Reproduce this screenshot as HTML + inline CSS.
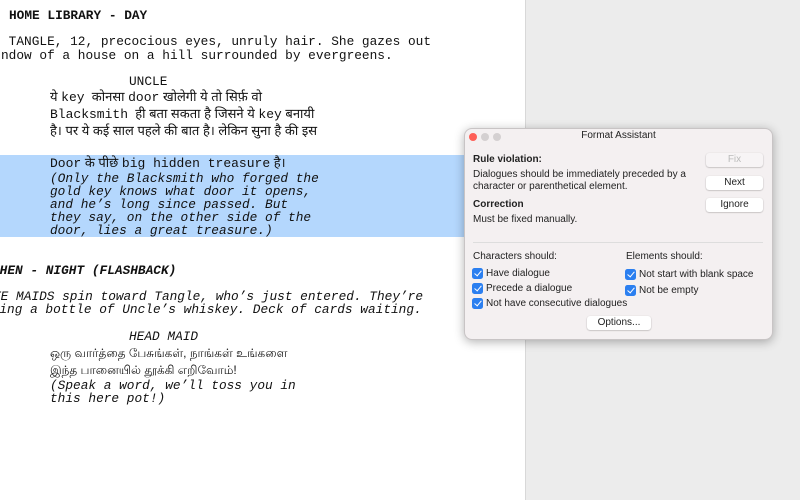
<!DOCTYPE html>
<html><head><meta charset="utf-8"><style>
*{margin:0;padding:0;box-sizing:border-box}
body{width:800px;height:500px;overflow:hidden;background:#fff;position:relative;font-family:"Liberation Mono",monospace;font-size:12.8px;color:#111}
.side{position:absolute;left:525px;top:0;width:275px;height:500px;background:#ececec;border-left:1px solid #d8d8d8}
.hl{position:absolute;left:0;top:155px;width:525px;height:82px;background:#b4d7fd}
.l{position:absolute;white-space:pre;line-height:14px}
.b{font-weight:bold}.i{font-style:italic}
.dev{font-family:"Liberation Sans","DejaVu Sans",sans-serif;font-size:13px}
.dlg{position:absolute;left:464px;top:128px;width:309px;height:212px;background:#f4f0f1;border-radius:8px;box-shadow:0 2px 10px rgba(0,0,0,.3);border:1px solid #c8c4c5;font-family:"Liberation Sans",sans-serif;font-size:10px;color:#222}
.dlg .t{position:absolute;white-space:nowrap}
.dot{position:absolute;top:4px;width:8px;height:8px;border-radius:50%;background:#d4d0d1}
.btn{position:absolute;left:241px;width:57px;height:14px;background:#fff;border-radius:3px;box-shadow:0 0.5px 1.5px rgba(0,0,0,.3);text-align:center;line-height:14px;font-size:10px}
.cb{position:absolute;width:11px;height:11px;border-radius:2.5px;background:#2b7ff0}
.cb:after{content:"";position:absolute;left:3.5px;top:1px;width:3px;height:6px;border:solid #fff;border-width:0 1.6px 1.6px 0;transform:rotate(40deg)}
</style></head><body>
<div class="side"></div>
<div class="hl"></div>
<div class="l b" style="left:9px;top:9px">HOME LIBRARY - DAY</div>
<div class="l" style="left:1px;top:35px"> TANGLE, 12, precocious eyes, unruly hair. She gazes out</div>
<div class="l" style="left:1px;top:49px">ndow of a house on a hill surrounded by evergreens.</div>
<div class="l" style="left:129px;top:75px">UNCLE</div>
<div class="l dev" style="left:50px;top:90px">ये <span style="font-family:'Liberation Mono'">key</span>  कोनसा <span style="font-family:'Liberation Mono'">door</span> खोलेगी ये तो सिर्फ़ वो</div>
<div class="l dev" style="left:50px;top:107px"><span style="font-family:'Liberation Mono'">Blacksmith</span>  ही बता सकता है जिसने ये <span style="font-family:'Liberation Mono'">key</span> बनायी</div>
<div class="l dev" style="left:50px;top:124px">है। पर ये कई साल पहले की बात है। लेकिन सुना है की इस</div>
<div class="l dev" style="left:50px;top:156px"><span style="font-family:'Liberation Mono'">Door</span> के पीछे <span style="font-family:'Liberation Mono'">big hidden treasure</span> है।</div>
<div class="l i" style="left:50px;top:172px">(Only the Blacksmith who forged the</div>
<div class="l i" style="left:50px;top:185px">gold key knows what door it opens,</div>
<div class="l i" style="left:50px;top:198px">and he’s long since passed. But</div>
<div class="l i" style="left:50px;top:211px">they say, on the other side of the</div>
<div class="l i" style="left:50px;top:224px">door, lies a great treasure.)</div>
<div class="l b i" style="left:-8px;top:264px">CHEN - NIGHT (FLASHBACK)</div>
<div class="l i" style="left:-7px;top:290px">TE MAIDS spin toward Tangle, who’s just entered. They’re</div>
<div class="l i" style="left:-16px;top:303px">aring a bottle of Uncle’s whiskey. Deck of cards waiting.</div>
<div class="l i" style="left:129px;top:330px">HEAD MAID</div>
<div class="l dev" style="left:50px;top:346px;font-size:12px">ஒரு வார்த்தை பேசுங்கள், நாங்கள் உங்களை</div>
<div class="l dev" style="left:50px;top:363px;font-size:12px">இந்த பானையில் தூக்கி எறிவோம்!</div>
<div class="l i" style="left:50px;top:379px">(Speak a word, we’ll toss you in</div>
<div class="l i" style="left:50px;top:392px">this here pot!)</div>

<div class="dlg">
<div class="dot" style="left:4px;background:#fe5f57"></div>
<div class="dot" style="left:16px"></div>
<div class="dot" style="left:28px"></div>
<div class="t" style="left:0;width:307px;text-align:center;top:1px">Format Assistant</div>
<div class="t" style="left:8px;top:25px;font-weight:bold">Rule violation:</div>
<div class="t" style="left:8px;top:40px">Dialogues should be immediately preceded by a</div>
<div class="t" style="left:8px;top:52px">character or parenthetical element.</div>
<div class="t" style="left:8px;top:70px;font-weight:bold">Correction</div>
<div class="t" style="left:8px;top:85px">Must be fixed manually.</div>
<div class="btn" style="top:24px;color:#bbb;background:#f7f4f5">Fix</div>
<div class="btn" style="top:47px">Next</div>
<div class="btn" style="top:69px">Ignore</div>
<div style="position:absolute;left:8px;top:113px;width:290px;height:1px;background:#ddd"></div>
<div class="t" style="left:8px;top:122px">Characters should:</div>
<div class="t" style="left:161px;top:122px">Elements should:</div>
<div class="cb" style="left:7px;top:139px"></div><div class="t" style="left:21px;top:139px">Have dialogue</div>
<div class="cb" style="left:7px;top:154px"></div><div class="t" style="left:21px;top:154px">Precede a dialogue</div>
<div class="cb" style="left:7px;top:169px"></div><div class="t" style="left:21px;top:169px">Not have consecutive dialogues</div>
<div class="cb" style="left:160px;top:140px"></div><div class="t" style="left:174px;top:140px">Not start with blank space</div>
<div class="cb" style="left:160px;top:156px"></div><div class="t" style="left:174px;top:156px">Not be empty</div>
<div class="btn" style="left:122px;top:187px;width:64px">Options...</div>
</div>
</body></html>
